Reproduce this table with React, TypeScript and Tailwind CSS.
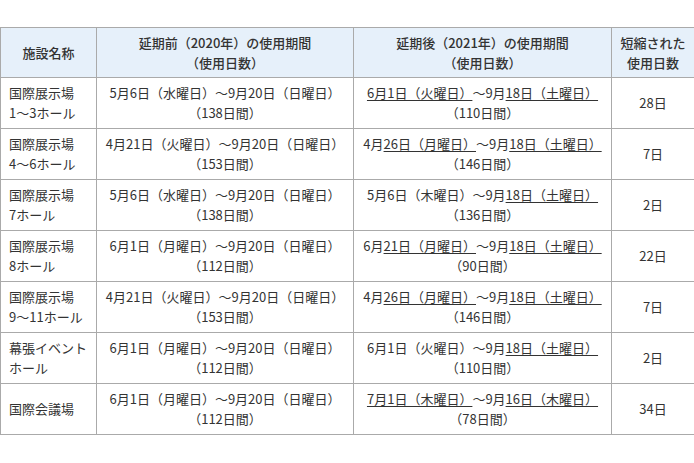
const rows: { name: string[]; before: string; beforeDays: string; after: (string | [string])[]; afterDays: string; diff: string }[] = [
  { name: ['国際展示場', '1～3ホール'], before: '5月6日（水曜日）～9月20日（日曜日）', beforeDays: '（138日間）', after: [['6月1日（火曜日）'], '～9月', ['18日（土曜日）']], afterDays: '（110日間）', diff: '28日' },
  { name: ['国際展示場', '4～6ホール'], before: '4月21日（火曜日）～9月20日（日曜日）', beforeDays: '（153日間）', after: ['4月', ['26日（月曜日）'], '～9月', ['18日（土曜日）']], afterDays: '（146日間）', diff: '7日' },
  { name: ['国際展示場', '7ホール'], before: '5月6日（水曜日）～9月20日（日曜日）', beforeDays: '（138日間）', after: ['5月6日（木曜日）～9月', ['18日（土曜日）']], afterDays: '（136日間）', diff: '2日' },
  { name: ['国際展示場', '8ホール'], before: '6月1日（月曜日）～9月20日（日曜日）', beforeDays: '（112日間）', after: ['6月', ['21日（月曜日）'], '～9月', ['18日（土曜日）']], afterDays: '（90日間）', diff: '22日' },
  { name: ['国際展示場', '9～11ホール'], before: '4月21日（火曜日）～9月20日（日曜日）', beforeDays: '（153日間）', after: ['4月', ['26日（月曜日）'], '～9月', ['18日（土曜日）']], afterDays: '（146日間）', diff: '7日' },
  { name: ['幕張イベント', 'ホール'], before: '6月1日（月曜日）～9月20日（日曜日）', beforeDays: '（112日間）', after: ['6月1日（火曜日）～9月', ['18日（土曜日）']], afterDays: '（110日間）', diff: '2日' },
  { name: ['国際会議場'], before: '6月1日（月曜日）～9月20日（日曜日）', beforeDays: '（112日間）', after: [['7月1日（木曜日）'], '～9月', ['16日（木曜日）']], afterDays: '（78日間）', diff: '34日' },
]

const cell = 'border border-[#aaaaaa] align-middle'

export default function App() {
  return (
    <div
      className="h-[463px] w-[694px] bg-white pt-[27px] text-[13px] leading-[20px] text-[#333333]"
      style={{ fontFamily: '"Noto Sans CJK JP", "Noto Sans", sans-serif' }}
    >
      <table className="w-[694px] table-fixed border-collapse">
        <colgroup>
          <col className="w-[96px]" />
          <col className="w-[257px]" />
          <col className="w-[258px]" />
          <col className="w-[83px]" />
        </colgroup>
        <thead>
          <tr className="h-[50px] bg-[#e6f0fa]">
            <th className={`${cell} font-medium`}>施設名称</th>
            <th className={`${cell} font-medium`}>
              延期前（2020年）の使用期間
              <br />
              （使用日数）
            </th>
            <th className={`${cell} font-medium`}>
              延期後（2021年）の使用期間
              <br />
              （使用日数）
            </th>
            <th className={`${cell} font-medium`}>
              短縮された
              <br />
              使用日数
            </th>
          </tr>
        </thead>
        <tbody>
          {rows.map((r, i) => (
            <tr key={i} className="h-[51px]">
              <td className={`${cell} px-[8px]`}>
                {r.name.map((n, j) => (
                  <div key={j}>{n}</div>
                ))}
              </td>
              <td className={`${cell} text-center`}>
                <div>{r.before}</div>
                <div>{r.beforeDays}</div>
              </td>
              <td className={`${cell} text-center`}>
                <div>
                  {r.after.map((p, j) =>
                    typeof p === 'string' ? (
                      <span key={j}>{p}</span>
                    ) : (
                      <span key={j} className="underline underline-offset-2">
                        {p[0]}
                      </span>
                    )
                  )}
                </div>
                <div>{r.afterDays}</div>
              </td>
              <td className={`${cell} text-center`}>{r.diff}</td>
            </tr>
          ))}
        </tbody>
      </table>
    </div>
  )
}
